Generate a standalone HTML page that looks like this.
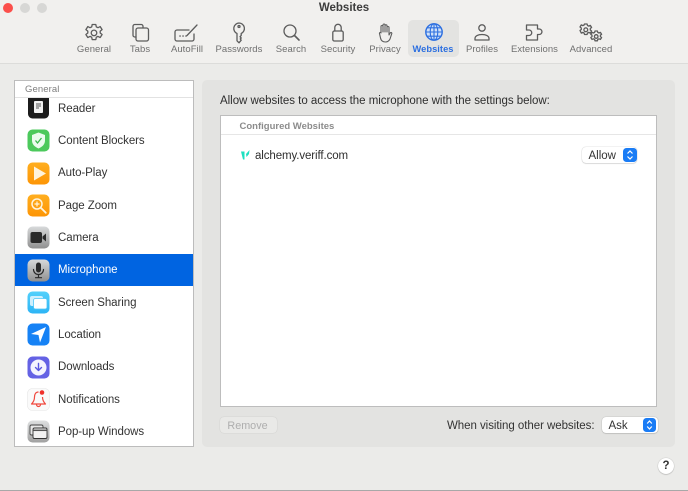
<!DOCTYPE html>
<html><head><meta charset="utf-8"><style>
html,body{margin:0;padding:0}
body{width:688px;height:491px;overflow:hidden;position:relative;background:#ebebe9;font-family:"Liberation Sans",sans-serif;color:#333;filter:blur(.25px)}
.a{position:absolute}
.t{position:absolute;white-space:nowrap}
.tl{position:absolute;top:43.5px;width:80px;text-align:center;font-size:9.5px;line-height:11px;color:#707070;letter-spacing:.05px}
.row{position:absolute;left:58px;font-size:11.5px;line-height:14px;color:#333;white-space:nowrap;letter-spacing:-.06px}
svg{position:absolute;overflow:visible}
.s{fill:none;stroke:#5c5c5c;stroke-width:1.3;stroke-linecap:round;stroke-linejoin:round}
</style></head><body>
<div class="a" style="left:0;top:0;width:688px;height:63px;background:#f1f0ee;border-bottom:1px solid #dcdcda"></div>
<div class="a" style="left:3px;top:3px;width:10px;height:10px;border-radius:50%;background:#fb4f4b"></div>
<div class="a" style="left:20px;top:3px;width:10px;height:10px;border-radius:50%;background:#d7d7d5"></div>
<div class="a" style="left:37px;top:3px;width:10px;height:10px;border-radius:50%;background:#d7d7d5"></div>
<div class="t" style="left:0;width:688px;text-align:center;top:1px;font-size:11.5px;line-height:14px;font-weight:bold;color:#3c3c3c">Websites</div>
<div class="a" style="left:408px;top:20px;width:51px;height:37px;border-radius:5px;background:#e3e3e1"></div>

<svg class="s" style="left:84px;top:23px" width="20" height="20" viewBox="0 0 20 20"><path d="M8.200 1.500h3.600l.5 2.400 1.700.8 2.200-1.100 1.900 3-1.900 1.500v1.900l1.900 1.500-1.900 3-2.200-1.100-1.700.8-.5 2.400H8.200l-.5-2.400-1.700-.8-2.200 1.100-1.900-3 1.900-1.500V8.100L1.900 6.600l1.900-3L6 4.700l1.700-.8z"/><circle cx="10" cy="9.900" r="2.800"/></svg>
<svg class="s" style="left:131px;top:23px" width="20" height="20" viewBox="0 0 20 20"><path d="M5 14H3.800A1.800 1.800 0 0 1 2 12.200V3.300A1.800 1.800 0 0 1 3.800 1.500h6.400A1.800 1.800 0 0 1 12 3.300V5"/><rect x="5" y="5" width="12.500" height="13" rx="2"/></svg>
<svg class="s" style="left:174px;top:24px" width="27" height="19" viewBox="0 0 27 19"><path d="M15 6H3a2 2 0 0 0-2 2v7a2 2 0 0 0 2 2h15a2 2 0 0 0 2-2v-5"/><path d="M23 1 13 11.500"/><path d="M6 12h.1M9 12h.1M12 12h.1" stroke-width="1.600"/></svg>
<svg class="s" style="left:232px;top:22px" width="14" height="22" viewBox="0 0 14 22"><path d="M7 1a5.500 5.500 0 0 1 2.200 10.500v2l-1.200 1.200 1.200 1.300-1 1 1 1.200L7 20.800l-2-2V11.500A5.500 5.500 0 0 1 7 1z"/><circle cx="7" cy="4.500" r="1"/></svg>
<svg class="s" style="left:283px;top:24px" width="18" height="18" viewBox="0 0 18 18"><circle cx="7" cy="7" r="6"/><path d="m11.500 11.500 4.500 4.500" stroke-width="1.600"/></svg>
<svg class="s" style="left:332px;top:23px" width="12" height="19" viewBox="0 0 12 19"><rect x=".8" y="8" width="10.400" height="10" rx="1.500"/><path d="M2.800 8V4.500a3.200 3.200 0 0 1 6.400 0V8"/></svg>
<svg class="s" style="left:377px;top:23px" width="16" height="20" viewBox="0 0 16 20"><path d="M4 10V3.500a1 1 0 0 1 2 0V9V2a1 1 0 0 1 2 0v7V2.800a1 1 0 0 1 2 0V9V4.500a1 1 0 0 1 2 0V12l1.200-2c.7-1 2-.3 1.500.8L13 16c-1 2-2.500 3-4.500 3C5.500 19 4 17.500 3.500 15L2.500 10.500c-.3-1 1.200-1.500 1.500-.5z" stroke-width="1.100"/></svg>
<svg style="left:425px;top:23px" width="18" height="18" viewBox="0 0 18 18" fill="none" stroke="#2c6fe0" stroke-width="1.100"><circle cx="9" cy="9" r="8.200" fill="#cfe0f8" stroke-width="1.400"/><ellipse cx="9" cy="9" rx="3.800" ry="8.200"/><path d="M9 .8v16.400M.8 9h16.400M2 4.800h14M2 13.200h14"/></svg>
<svg class="s" style="left:474px;top:24px" width="16" height="17" viewBox="0 0 16 17"><circle cx="8" cy="4" r="3.200"/><path d="M1 16v-1.500C1 12 4 10.500 8 10.500s7 1.500 7 4V16z"/></svg>
<svg class="s" style="left:525px;top:24px" width="20" height="17" viewBox="0 0 20 17"><path d="M1.500 1h11v4h1.700a2.500 2.500 0 0 1 0 5.500h-1.700V16H1.500v-4.500H4a2.700 2.700 0 0 0 0-5.500H1.500z"/></svg>
<svg class="s" style="left:579px;top:23px" width="24" height="20" viewBox="0 0 24 20" stroke-width="1.100"><path d="M5.500 1h2.600l.4 1.500 1.300.6 1.500-.7 1.300 2.100-1.300 1v1.500l1.300 1-1.300 2.100-1.500-.7-1.300.6-.4 1.500H5.500l-.4-1.500-1.300-.6-1.500.7L1 7.500l1.300-1V5L1 4l1.300-2.100 1.500.7 1.300-.6z"/><circle cx="6.800" cy="6.800" r="1.900"/><path d="M16 8h2.400l.4 1.400 1.200.6 1.400-.6 1.200 1.900-1.200.9v1.400l1.200.9-1.200 1.900-1.400-.6-1.200.6-.4 1.400H16l-.4-1.400-1.200-.6-1.400.6-1.200-1.900 1.200-.9v-1.400l-1.200-.9 1.200-1.900 1.400.6 1.200-.6z"/><circle cx="17.200" cy="13.500" r="1.800"/></svg>

<div class="tl" style="left:54px">General</div>
<div class="tl" style="left:100px">Tabs</div>
<div class="tl" style="left:147px">AutoFill</div>
<div class="tl" style="left:199px">Passwords</div>
<div class="tl" style="left:251px">Search</div>
<div class="tl" style="left:298px">Security</div>
<div class="tl" style="left:345px">Privacy</div>
<div class="tl" style="left:393px;color:#2c6fe0;font-weight:bold;font-size:9.3px">Websites</div>
<div class="tl" style="left:442px">Profiles</div>
<div class="tl" style="left:494.500px">Extensions</div>
<div class="tl" style="left:551px">Advanced</div>

<!-- sidebar -->
<div class="a" style="left:14px;top:80px;width:178px;height:365px;background:#fff;border:1px solid #bcbcbc"></div>
<div class="t" style="left:25px;top:84px;font-size:9.500px;line-height:11px;color:#7e7e7e;letter-spacing:.1px">General</div>
<div class="a" style="left:15px;top:97px;width:178px;height:1px;background:#e2e2e2"></div>
<div class="a" style="left:15px;top:253.500px;width:178px;height:32.500px;background:#0064e1"></div>

<!-- Reader -->
<svg style="left:27px;top:98px" width="23" height="21" viewBox="0 0 23 21"><path d="M1 0h21v16a4.500 4.500 0 0 1-4.500 4.500h-12A4.500 4.500 0 0 1 1 16z" fill="#1c1c1c"/><rect x="7" y="3" width="9" height="12" rx="1" fill="#f2f2f2"/><path d="M9 6h5M9 8h5M9 10h3" stroke="#555" stroke-width="1"/></svg>
<!-- Content Blockers -->
<svg style="left:27px;top:129px" width="23" height="23" viewBox="0 0 23 23"><rect x=".5" y=".5" width="22" height="22" rx="5" fill="#4cc95c"/><path d="M11.500 3.500 18 6v5.500c0 4-3 6.500-6.500 8-3.500-1.500-6.500-4-6.500-8V6z" fill="#eafbee"/><path d="m8.500 11.500 2 2.500 4-5" fill="none" stroke="#38b84c" stroke-width="1.300"/></svg>
<!-- Auto-Play -->
<svg style="left:27px;top:161.500px" width="23" height="23" viewBox="0 0 23 23"><defs><linearGradient id="o" x1="0" y1="0" x2="0" y2="1"><stop offset="0" stop-color="#ffae1f"/><stop offset="1" stop-color="#fd9505"/></linearGradient></defs><rect x=".5" y=".5" width="22" height="22" rx="5" fill="url(#o)"/><path d="M7 4.500 19 11.500 7 18.500z" fill="#fff4dc"/></svg>
<!-- Page Zoom -->
<svg style="left:27px;top:194px" width="23" height="23" viewBox="0 0 23 23"><rect x=".5" y=".5" width="22" height="22" rx="5" fill="url(#o)"/><circle cx="10" cy="10" r="5" fill="none" stroke="#fff4dc" stroke-width="1.500"/><path d="M7.500 10h5M10 7.500v5" stroke="#fff4dc" stroke-width="1.200"/><path d="m13.800 13.800 5 5" stroke="#fff4dc" stroke-width="1.800" stroke-linecap="round"/></svg>
<!-- Camera -->
<svg style="left:27px;top:226px" width="23" height="23" viewBox="0 0 23 23"><defs><linearGradient id="g" x1="0" y1="0" x2="0" y2="1"><stop offset="0" stop-color="#d8dadb"/><stop offset="1" stop-color="#909090"/></linearGradient></defs><rect x=".5" y=".5" width="22" height="22" rx="5" fill="url(#g)"/><rect x="3.500" y="6" width="11.500" height="11" rx="2" fill="#2a2a2a"/><path d="m15.500 10.500 3.500-3v8l-3.500-3z" fill="#2a2a2a"/></svg>
<!-- Microphone -->
<svg style="left:27px;top:258.500px" width="23" height="23" viewBox="0 0 23 23"><rect x=".5" y=".5" width="22" height="22" rx="5" fill="url(#g)"/><rect x="9" y="3.500" width="5" height="10" rx="2.500" fill="#2a2a2a"/><path d="M6.500 10.500a5 5 0 0 0 10 0M11.500 15.500v3M8.500 18.700h6" fill="none" stroke="#2a2a2a" stroke-width="1.200" stroke-linecap="round"/></svg>
<!-- Screen Sharing -->
<svg style="left:27px;top:291px" width="23" height="23" viewBox="0 0 23 23"><defs><linearGradient id="c" x1="0" y1="0" x2="0" y2="1"><stop offset="0" stop-color="#53d0fb"/><stop offset="1" stop-color="#2db4f5"/></linearGradient></defs><rect x=".5" y=".5" width="22" height="22" rx="5" fill="url(#c)"/><rect x="3" y="5" width="13" height="10" rx="2" fill="#cfeffd"/><rect x="6.500" y="7.500" width="13.500" height="10.500" rx="2" fill="#fff" stroke="#4cc6f8" stroke-width=".8"/></svg>
<!-- Location -->
<svg style="left:27px;top:323px" width="23" height="23" viewBox="0 0 23 23"><rect x=".5" y=".5" width="22" height="22" rx="5" fill="#1682f5"/><path d="M19 4 4 11l7.500 1 1.500 7.500z" fill="#fff"/></svg>
<!-- Downloads -->
<svg style="left:27px;top:355.500px" width="23" height="23" viewBox="0 0 23 23"><rect x=".5" y=".5" width="22" height="22" rx="5" fill="#6462e4"/><circle cx="11.500" cy="11.500" r="8" fill="#f4f4fe"/><path d="M11.500 7.500v7M8.500 11.500l3 3 3-3" fill="none" stroke="#5a58e0" stroke-width="1.400" stroke-linecap="round" stroke-linejoin="round"/></svg>
<!-- Notifications -->
<svg style="left:27px;top:388px" width="23" height="23" viewBox="0 0 23 23"><rect x=".5" y=".5" width="22" height="22" rx="5" fill="#fafafa" stroke="#e6e6e6" stroke-width=".6"/><path d="M11.500 4C8.500 4 7.500 6.500 7.500 9c0 3-1 5-3 7h14c-2-2-3-4-3-7M9.500 16.500a2 2 0 0 0 4 0" fill="none" stroke="#f0483e" stroke-width="1.200" stroke-linejoin="round"/><circle cx="15" cy="4.500" r="2.300" fill="#f0302a"/></svg>
<!-- Pop-up -->
<svg style="left:27px;top:420px" width="23" height="23" viewBox="0 0 23 23"><rect x=".5" y=".5" width="22" height="22" rx="5" fill="url(#g)" opacity=".85"/><rect x="3" y="5" width="13" height="10" rx="1.500" fill="#e8e8e8" stroke="#444" stroke-width=".9"/><rect x="6" y="8" width="14" height="10.500" rx="1.500" fill="#f2f2f2" stroke="#333" stroke-width=".9"/><path d="M6.500 10.300h13" stroke="#555" stroke-width="1.500"/></svg>

<div class="row" style="top:101.5px">Reader</div>
<div class="row" style="top:134px">Content Blockers</div>
<div class="row" style="top:166px">Auto-Play</div>
<div class="row" style="top:198.5px">Page Zoom</div>
<div class="row" style="top:231px">Camera</div>
<div class="row" style="top:263px;color:#fff">Microphone</div>
<div class="row" style="top:295.5px">Screen Sharing</div>
<div class="row" style="top:328px">Location</div>
<div class="row" style="top:360px">Downloads</div>
<div class="row" style="top:392.5px">Notifications</div>
<div class="row" style="top:425px">Pop-up Windows</div>

<!-- panel -->
<div class="a" style="left:202px;top:80px;width:473px;height:367px;background:#e3e3e1;border-radius:5px"></div>
<div class="t" style="left:220px;top:94px;font-size:11.500px;line-height:14px;color:#2e2e2e;letter-spacing:-.03px">Allow websites to access the microphone with the settings below:</div>
<div class="a" style="left:220px;top:115px;width:435px;height:290px;background:#fff;border:1px solid #bdbdbd"></div>
<div class="t" style="left:239.500px;top:121px;font-size:9.500px;line-height:11px;font-weight:bold;color:#8c8c8c">Configured Websites</div>
<div class="a" style="left:221px;top:134px;width:435px;height:1px;background:#e6e6e6"></div>
<svg style="left:240px;top:149px" width="11" height="11" viewBox="0 0 11 11"><path d="M1 2.500 4.500 2.500 4.500 10.500 3 10.500z" fill="#1ee0c0"/><path d="M6 5 9.500 1 9 5 6.500 8z" fill="#1ee0c0"/></svg>
<div class="t" style="left:255px;top:148.500px;font-size:11.500px;line-height:14px;color:#2e2e2e;letter-spacing:-.1px">alchemy.veriff.com</div>

<div class="a" style="left:582px;top:147px;width:55px;height:16px;background:#fff;border-radius:4px;box-shadow:0 0 1px rgba(0,0,0,.35),0 1px 1px rgba(0,0,0,.1)"></div>
<div class="t" style="left:588.500px;top:148.500px;font-size:11.500px;line-height:14px;color:#333">Allow</div>
<svg style="left:623px;top:148px" width="14" height="14" viewBox="0 0 14 14"><rect width="14" height="14" rx="3.500" fill="#1a7cf5"/><path d="M4.500 5.500 7 3l2.500 2.500M4.500 8.500 7 11l2.500-2.500" fill="none" stroke="#fff" stroke-width="1.200"/></svg>

<div class="a" style="left:220px;top:417px;width:57px;height:16px;background:#e9e9e7;border-radius:4px;box-shadow:0 0 1px rgba(0,0,0,.2)"></div>
<div class="t" style="left:220px;width:55px;text-align:center;top:418.500px;font-size:10.800px;line-height:14px;color:#aeaeae">Remove</div>
<div class="t" style="left:447px;top:418.500px;font-size:11.500px;line-height:14px;color:#333;letter-spacing:-.05px">When visiting other websites:</div>
<div class="a" style="left:602px;top:417px;width:56px;height:16px;background:#fff;border-radius:4px;box-shadow:0 0 1px rgba(0,0,0,.35),0 1px 1px rgba(0,0,0,.1)"></div>
<div class="t" style="left:608.500px;top:418.500px;font-size:11.500px;line-height:14px;color:#333">Ask</div>
<svg style="left:643px;top:418px" width="13" height="14" viewBox="0 0 13 14"><rect width="13" height="14" rx="3.500" fill="#1a7cf5"/><path d="M4.200 5.500 6.500 3l2.300 2.500M4.200 8.500 6.500 11l2.300-2.500" fill="none" stroke="#fff" stroke-width="1.200"/></svg>

<div class="a" style="left:658px;top:458px;width:16px;height:16px;background:#fff;border-radius:50%;box-shadow:0 0 1px rgba(0,0,0,.35),0 1px 1px rgba(0,0,0,.12);text-align:center;font-size:11.500px;line-height:16px;font-weight:bold;color:#333">?</div>
<div class="a" style="left:0;top:489.500px;width:688px;height:1.500px;background:#a8a8a8"></div>
</body></html>
